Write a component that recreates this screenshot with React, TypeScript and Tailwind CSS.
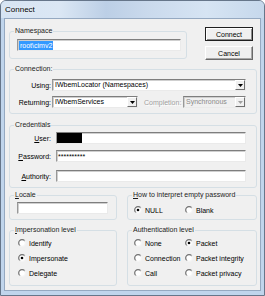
import React from "react";

function Group({ label, className = "", children }: { label: React.ReactNode; className?: string; children?: React.ReactNode }) {
  return (
    <fieldset className={`min-w-0 rounded-[3px] border border-[#d5dfe5] ${className}`}>
      <legend className="ml-[4px] px-[1px] leading-[8px] text-[#1b1b1b]">{label}</legend>
      {children}
    </fieldset>
  );
}

function Sunken({ className = "", children }: { className?: string; children?: React.ReactNode }) {
  return (
    <div
      className={`flex h-[12px] items-center overflow-hidden border border-[#eaeaea] border-t-[#7e7e7e] border-l-[#989898] shadow-[inset_1px_1px_0_#cfcfcf] ${className}`}
    >
      {children}
    </div>
  );
}

function Arrow({ disabled }: { disabled?: boolean }) {
  return (
    <div className="flex h-full w-[10px] shrink-0 items-center justify-center border border-[#6f6f6f] border-t-white border-l-white bg-[#f0f0f0]">
      <svg width="5" height="3" viewBox="0 0 5 3">
        <path d="M0 0h5L2.5 3z" fill={disabled ? "#a0a0a0" : "#000"} />
      </svg>
    </div>
  );
}

function Combo({ value, className = "", disabled }: { value: string; className?: string; disabled?: boolean }) {
  return (
    <Sunken className={`${className} ${disabled ? "bg-[#f0f0f0]" : "bg-white"}`}>
      <span className={`flex-1 truncate pl-[2px] leading-[10px] ${disabled ? "text-[#8a8a8a]" : ""}`}>{value}</span>
      <Arrow disabled={disabled} />
    </Sunken>
  );
}

function Radio({ label, checked }: { label: React.ReactNode; checked?: boolean }) {
  return (
    <div className="flex h-[12px] items-center gap-[3px] whitespace-nowrap">
      <svg width="8" height="8" viewBox="0 0 8 8" className="shrink-0">
        <defs>
          <linearGradient id="radioRing" x1="0" y1="0" x2="1" y2="1">
            <stop offset="0.4" stopColor="#707070" />
            <stop offset="0.62" stopColor="#f4f4f4" />
          </linearGradient>
        </defs>
        <circle cx="4" cy="4" r="3.3" fill="#fff" stroke="url(#radioRing)" strokeWidth="1.2" />
        {checked && <circle cx="4" cy="4" r="1.3" fill="#000" />}
      </svg>
      <span>{label}</span>
    </div>
  );
}

function Button({ label, isDefault }: { label: string; isDefault?: boolean }) {
  return (
    <div
      className={
        isDefault
          ? "flex h-[14px] items-center justify-center border border-[#202020] bg-[#f0f0f0] shadow-[inset_1px_1px_0_#fff,inset_-1px_-1px_0_#8a8a8a]"
          : "flex h-[14px] items-center justify-center border border-[#6a6a6a] border-t-white border-l-white bg-[#f0f0f0] shadow-[inset_-1px_-1px_0_#a8a8a8]"
      }
    >
      {label}
    </div>
  );
}

function Row({ label, children, className = "" }: { label: React.ReactNode; children: React.ReactNode; className?: string }) {
  return (
    <div className={`flex items-center ${className}`}>
      <div className="w-[41px] shrink-0 text-right">{label}</div>
      {children}
    </div>
  );
}

export default function App() {
  return (
    <div className="h-[296px] w-[265px] overflow-hidden bg-white font-['Liberation_Sans',Arial,sans-serif] text-[7px] leading-[9px] text-black">
      <div className="flex h-[296px] flex-col rounded-t-[6px] border border-[#66768a] bg-[#c0d5ec]">
        <div className="flex h-[17px] shrink-0 items-center rounded-t-[5px] bg-[linear-gradient(90deg,#d6e4f3_0%,#dbe7f4_22%,#bccfe6_40%,#c9d9ec_55%,#d6e4f3_78%,#c6d8ec_100%)] pl-[4px] text-[8px] [text-shadow:0_0_4px_#fff]">
          Connect
        </div>
        <div className="mx-[3px] mb-[4px] flex-1 border border-[#95a9c1] bg-[#f0f0f0] pl-[4px] pr-[3px] pt-[8px]">
          <div className="flex items-start justify-between">
            <Group label="Namespace" className="w-[178px] pb-[7px]">
              <Sunken className="ml-[7px] mr-[5px] mt-[4px] bg-white">
                <span className="ml-[1px] bg-[#3399ff] px-[1px] leading-[9px] text-white">root\cimv2</span>
              </Sunken>
            </Group>
            <div className="mr-[4px] flex w-[48px] flex-col gap-[5px]">
              <Button label="Connect" isDefault />
              <Button label="Cancel" />
            </div>
          </div>

          <Group label="Connection:" className="mt-[5px] pb-[5px]">
            <Row label="Using:" className="mt-[6px]">
              <Combo value="IWbemLocator (Namespaces)" className="ml-[1px] w-[194px]" />
            </Row>
            <Row label="Returning:" className="mt-[5px]">
              <Combo value="IWbemServices" className="ml-[1px] w-[86px]" />
              <span className="ml-[6px] w-[39px] text-[#a0a0a0] [text-shadow:1px_1px_0_#fff]">Completion:</span>
              <Combo value="Synchronous" className="w-[63px]" disabled />
            </Row>
          </Group>

          <Group label="Credentials" className="mt-[7px] pb-[5px]">
            <Row label={<><u>U</u>ser:</>} className="mt-[3px]">
              <Sunken className="ml-[5px] w-[190px] bg-white">
                <span className="h-full w-[25px] bg-black" />
              </Sunken>
            </Row>
            <Row label={<><u>P</u>assword:</>} className="mt-[6px]">
              <Sunken className="ml-[5px] w-[190px] bg-white">
                <span className="pl-[1px] leading-[7px]">**********</span>
              </Sunken>
            </Row>
            <Row label={<><u>A</u>uthority:</>} className="mt-[8px]">
              <Sunken className="ml-[5px] w-[190px] bg-white" />
            </Row>
          </Group>

          <div className="mt-[3px] flex gap-[10px]">
            <Group label={<><u>L</u>ocale</>} className="w-[108px] pb-[5px]">
              <Sunken className="ml-[7px] mr-[8px] mt-[3px] bg-white" />
            </Group>
            <Group label={<><u>H</u>ow to interpret empty password</>} className="w-[130px] pb-[3px]">
              <div className="mt-[5px] flex pl-[6px]">
                <div className="w-[51px]">
                  <Radio label="NULL" checked />
                </div>
                <Radio label="Blank" />
              </div>
            </Group>
          </div>

          <div className="mt-[6px] flex gap-[10px]">
            <Group label={<><u>I</u>mpersonation level</>} className="w-[108px] pb-[6px]">
              <div className="mt-[3px] flex flex-col gap-[3px] pl-[8px]">
                <Radio label="Identify" />
                <Radio label="Impersonate" checked />
                <Radio label="Delegate" />
              </div>
            </Group>
            <Group label="Authentication level" className="w-[130px] pb-[6px]">
              <div className="mt-[3px] grid grid-cols-[51px_1fr] gap-y-[3px] pl-[6px]">
                <Radio label="None" />
                <Radio label="Packet" checked />
                <Radio label="Connection" />
                <Radio label="Packet integrity" />
                <Radio label="Call" />
                <Radio label="Packet privacy" />
              </div>
            </Group>
          </div>
        </div>
      </div>
    </div>
  );
}
